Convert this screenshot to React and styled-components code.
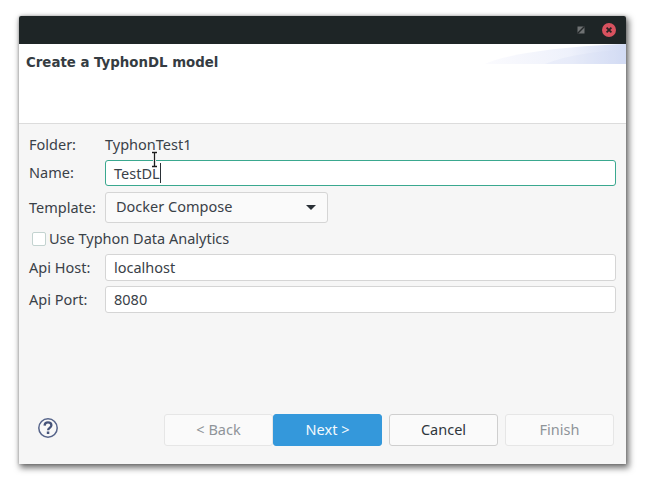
import React from "react";
import styled, { createGlobalStyle } from "styled-components";

const Global = createGlobalStyle`
  html, body { margin: 0; padding: 0; background: #fff; }
  body { font-family: "Noto Sans", "Open Sans", sans-serif; }
`;
const Desktop = styled.div`
  width: 649px; height: 490px; padding: 16px 0 0 19px; box-sizing: border-box; overflow: hidden;
`;
const Window = styled.div`
  position: relative; width: 607px; height: 448px; display: flex; flex-direction: column;
  background: #f6f6f6; border-radius: 2px 2px 0 0;
  box-shadow: 2px 3px 6px 1px rgba(0,0,0,.55), 0 0 3px rgba(0,0,0,.25);
`;
const TitleBar = styled.div`
  height: 28px; flex: none; background: #1e2526; display: flex; align-items: center;
  justify-content: flex-end; gap: 17px; padding: 0 10px 0 0; border-radius: 2px 2px 0 0;
`;
const WinIcon = styled.svg`display: block;`;
const Header = styled.div`
  position: relative; height: 79px; flex: none; background: #fff; border-bottom: 1px solid #dcdcdc;
  overflow: hidden;
`;
const Banner = styled.svg`position: absolute; top: 0; right: 0; display: block;`;
const Title = styled.h1`
  margin: 0; padding: 10px 0 0 7px; font: bold 13.33px/17px "DejaVu Sans", sans-serif; color: #353c42;
  position: relative;
`;
const Form = styled.div`
  flex: 1; display: flex; flex-direction: column; padding: 10px 10px 0 10px;
`;
const Row = styled.div`
  display: flex; align-items: center; height: ${p => p.$h}px; margin-top: ${p => p.$mt || 0}px;
`;
const Label = styled.span`
  width: 76px; flex: none; margin-bottom: 2px; font-size: 14.5px; line-height: 18px; color: #3a4148;
`;
const Value = styled.span`margin-bottom: 2px; font-size: 14.5px; line-height: 18px; color: #3a4148;`;
const Field = styled.div`
  position: relative; flex: 1; height: 100%; box-sizing: border-box; background: #fff;
  border: 1px solid ${p => p.$focus ? "#3aa88f" : "#d5d5d5"}; border-radius: 3px;
  padding: 0 0 ${p => p.$focus ? 0 : 2}px 8px; display: flex; align-items: center;
  font-size: 14.5px; color: #3a4148;
`;
const Caret = styled.span`
  width: 1px; height: 20px; background: #2a3036;
`;
const Select = styled.div`
  width: 223px; height: 100%; box-sizing: border-box; background: #fafafa; border: 1px solid #d5d5d5;
  border-radius: 3px; display: flex; align-items: center; justify-content: space-between;
  padding: 0 11px 4px 10px; font-size: 14.5px; color: #3a4148;
`;
const Arrow = styled.span`
  width: 0; height: 0; margin-top: 4px; border-left: 5px solid transparent; border-right: 5px solid transparent;
  border-top: 5px solid #2a3036;
`;
const Check = styled.label`
  display: flex; align-items: center; gap: 3px; height: 16px; margin: 8px 0 0 3px;
  font-size: 14.5px; line-height: 16px; color: #3a4148;
`;
const CheckText = styled.span`margin-bottom: 2px;`;
const Box = styled.span`
  width: 12px; height: 12px; background: #fff; border: 1px solid #c3d3d0; border-radius: 2px; flex: none;
`;
const Footer = styled.div`
  flex: none; height: 32px; margin-bottom: 18px; display: flex; align-items: flex-start;
  padding: 0 12px 0 19px;
`;
const Help = styled.svg`display: block; margin-top: 4px;`;
const Buttons = styled.div`display: flex; margin-left: auto;`;
const Button = styled.button`
  width: 109px; height: 32px; box-sizing: border-box; margin-left: ${p => p.$ml || 0}px;
  font: 14.5px "Noto Sans", "Open Sans", sans-serif; border-radius: 3px; padding: 0 0 2px;
  border: 1px solid ${p => p.$primary ? "#3498db" : p.disabled ? "#e6e6e6" : "#cfcfcf"};
  background: ${p => p.$primary ? "#3498db" : "#fafafa"};
  color: ${p => p.$primary ? "#f5fafd" : p.disabled ? "#8f9499" : "#2f363c"};
`;
const IBeam = styled.svg`position: absolute; left: 131px; top: 135px; display: block;`;

export default function App() {
  return (
    <Desktop>
      <Global />
      <Window>
        <TitleBar>
          <WinIcon width="8" height="8" viewBox="0 0 8 8">
            <rect x="0.5" y="0.5" width="7" height="7" fill="#6f7273" />
            <path d="M0.5 7.5L7.5 0.5" stroke="#25292a" strokeWidth="1.4" />
          </WinIcon>
          <WinIcon width="14" height="14" viewBox="0 0 14 14">
            <circle cx="7" cy="7" r="7" fill="#d8525f" />
            <path d="M4.6 4.6L9.4 9.4M9.4 4.6L4.6 9.4" stroke="#2a2224" strokeWidth="1.8" />
          </WinIcon>
        </TitleBar>
        <Header>
          <Banner width="141" height="20" viewBox="0 0 141 20">
            <defs>
              <linearGradient id="bn" x1="0" x2="1" y1="0" y2="0">
                <stop offset="0" stopColor="#fbfbfe" />
                <stop offset="0.6" stopColor="#eef1fb" />
                <stop offset="1" stopColor="#d2dbf4" />
              </linearGradient>
            </defs>
            <path d="M0 20C20 10 80 2 141 0V20Z" fill="url(#bn)" />
            <path d="M60 20C80 12 110 7 141 6V20Z" fill="#d2dbf4" opacity=".25" />
          </Banner>
          <Title>Create a TyphonDL model</Title>
        </Header>
        <Form>
          <Row $h={21}>
            <Label>Folder:</Label>
            <Value>TyphonTest1</Value>
          </Row>
          <Row $h={26} $mt={5}>
            <Label>Name:</Label>
            <Field $focus>TestDL<Caret /></Field>
          </Row>
          <Row $h={31} $mt={6}>
            <Label>Template:</Label>
            <Select>Docker Compose<Arrow /></Select>
          </Row>
          <Check><Box /><CheckText>Use Typhon Data Analytics</CheckText></Check>
          <Row $h={27} $mt={7}>
            <Label>Api Host:</Label>
            <Field>localhost</Field>
          </Row>
          <Row $h={27} $mt={5}>
            <Label>Api Port:</Label>
            <Field>8080</Field>
          </Row>
        </Form>
        <Footer>
          <Help width="20" height="20" viewBox="0 0 20 20">
            <circle cx="10" cy="10" r="9.2" fill="#f8f8f8" stroke="#56648a" strokeWidth="1.5" />
            <path d="M6.6 7.6C6.7 5.5 8.2 4.4 10 4.4c2 0 3.4 1.2 3.4 2.9 0 2.5-3.3 2.5-3.3 4.9" fill="none" stroke="#46547a" strokeWidth="2.3" />
            <rect x="8.8" y="13.5" width="2.5" height="2.5" fill="#46547a" />
          </Help>
          <Buttons>
            <Button disabled>&lt; Back</Button>
            <Button $primary>Next &gt;</Button>
            <Button $ml={7}>Cancel</Button>
            <Button $ml={7} disabled>Finish</Button>
          </Buttons>
        </Footer>
        <IBeam width="9" height="17" viewBox="0 0 9 17">
          <path d="M1.5 1.5H7.5M4.5 1.5V15.5M1.5 15.5H7.5" fill="none" stroke="#fff" strokeWidth="3" />
          <path d="M2 1.5H7M4.5 1.5V15.5M2 15.5H7" fill="none" stroke="#1c1c1c" strokeWidth="1.3" />
        </IBeam>
      </Window>
    </Desktop>
  );
}
